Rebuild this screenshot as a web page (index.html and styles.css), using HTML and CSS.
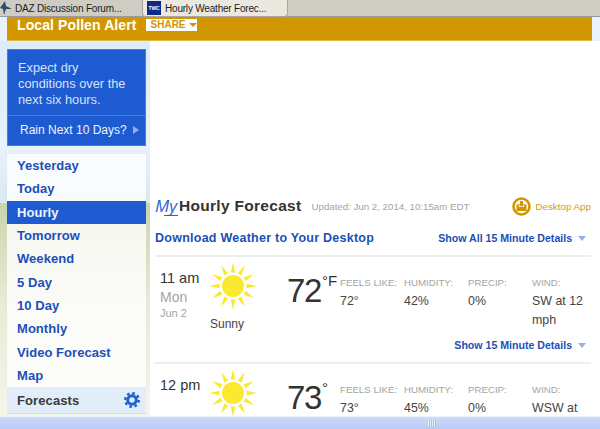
FILE: index.html
```html
<!DOCTYPE html>
<html lang="en">
<head>
  <meta charset="UTF-8">
  <title>Hourly Weather Forecast</title>
  <link rel="stylesheet" href="styles.css">
</head>
<body>
  <div class="tabs">
    <div class="tab">
      <svg class="tab-bird" width="12" height="14" viewBox="0 0 12 14"><polygon points="0,7 5,0 6,5 12,8 6,8 4,14 3,8" fill="#2f4f6f"/></svg>
      <span>DAZ Discussion Forum...</span>
    </div>
    <div class="tab tab-active">
      <span class="twc">TWC</span>
      <span>Hourly Weather Forec...</span>
    </div>
  </div>

  <div class="page">
    <div class="alert">
      <span class="alert-title">Local Pollen Alert</span>
      <span class="share">SHARE <i class="share-arrow"></i></span>
    </div>

    <div class="content">
      <div class="sidebar">
        <div class="promo">
          <p class="promo-text">Expect dry conditions over the next six hours.</p>
          <div class="promo-link">Rain Next 10 Days? <i class="promo-arrow"></i></div>
        </div>
        <nav class="nav">
          <a href="#">Yesterday</a>
          <a href="#">Today</a>
          <a href="#" class="active">Hourly</a>
          <a href="#">Tomorrow</a>
          <a href="#">Weekend</a>
          <a href="#">5 Day</a>
          <a href="#">10 Day</a>
          <a href="#">Monthly</a>
          <a href="#">Video Forecast</a>
          <a href="#">Map</a>
        </nav>
        <div class="nav-foot">
          <span>Forecasts</span>
          <svg width="16" height="16" viewBox="0 0 16 16">
            <circle cx="8" cy="8" r="6.8" fill="none" stroke="#1f5fd0" stroke-width="2.4" stroke-dasharray="2.7 2.64"/>
            <circle cx="8" cy="8" r="4.3" fill="none" stroke="#1f5fd0" stroke-width="3"/>
          </svg>
        </div>
      </div>

      <main class="main">
        <div class="head">
          <span class="my">My</span>
          <h1>Hourly Forecast</h1>
          <span class="updated">Updated: Jun 2, 2014, 10:15am EDT</span>
          <span class="app">
            <svg width="19" height="19" viewBox="0 0 19 19">
              <circle cx="9.5" cy="9.5" r="8" fill="#fff" stroke="#d29600" stroke-width="2.6"/>
              <path d="M4.5 7.5h2.5v2.5h5V7.5h2.5v6.5h-10z" fill="#d29600"/>
              <path d="M8 4h3v3h1.6L9.5 10 6.4 7H8z" fill="#d29600"/>
            </svg>
            Desktop App
          </span>
        </div>
        <div class="sub">
          <a href="#" class="download">Download Weather to Your Desktop</a>
          <a href="#" class="details">Show All 15 Minute Details <i class="down"></i></a>
        </div>

        <section class="row">
          <div class="row-grid">
            <div class="when">
              <div class="hour">11 am</div>
              <div class="day">Mon</div>
              <div class="date">Jun 2</div>
            </div>
            <div class="sky">
              <svg class="sun" width="48" height="48" viewBox="-24 -24 48 48"><use href="#sun"/></svg>
              <div class="sky-text">Sunny</div>
            </div>
            <div class="temp">72<sup>°F</sup></div>
            <div class="stat"><b>FEELS LIKE:</b>72°</div>
            <div class="stat"><b>HUMIDITY:</b>42%</div>
            <div class="stat"><b>PRECIP:</b>0%</div>
            <div class="stat"><b>WIND:</b>SW at 12 mph</div>
          </div>
          <a href="#" class="details row-details">Show 15 Minute Details <i class="down"></i></a>
        </section>

        <section class="row">
          <div class="row-grid">
            <div class="when">
              <div class="hour">12 pm</div>
            </div>
            <div class="sky">
              <svg class="sun" width="48" height="48" viewBox="-24 -24 48 48"><use href="#sun"/></svg>
            </div>
            <div class="temp">73<sup>°</sup></div>
            <div class="stat"><b>FEELS LIKE:</b>73°</div>
            <div class="stat"><b>HUMIDITY:</b>45%</div>
            <div class="stat"><b>PRECIP:</b>0%</div>
            <div class="stat"><b>WIND:</b>WSW at</div>
          </div>
        </section>
      </main>
    </div>
  </div>

  <div class="hscroll"><span class="grip"></span></div>

  <svg width="0" height="0" class="defs">
    <defs>
      <g id="sun" fill="#fbe92f">
        <circle r="11"/>
        <polygon id="ray" points="-2.2,-13.5 2.2,-13.5 0,-24"/>
        <use href="#ray" transform="rotate(30)"/>
        <use href="#ray" transform="rotate(60)"/>
        <use href="#ray" transform="rotate(90)"/>
        <use href="#ray" transform="rotate(120)"/>
        <use href="#ray" transform="rotate(150)"/>
        <use href="#ray" transform="rotate(180)"/>
        <use href="#ray" transform="rotate(210)"/>
        <use href="#ray" transform="rotate(240)"/>
        <use href="#ray" transform="rotate(270)"/>
        <use href="#ray" transform="rotate(300)"/>
        <use href="#ray" transform="rotate(330)"/>
      </g>
    </defs>
  </svg>
</body>
</html>
```

FILE: styles.css
```css
html, body {
  height: 100%;
}
body {
  margin: 0;
  display: flex;
  flex-direction: column;
  overflow: hidden;
  font-family: "Liberation Sans", Arial, sans-serif;
  color: #333;
  background: #fff;
}
a {
  text-decoration: none;
}
.defs {
  position: absolute;
}

/* browser tabs */
.tabs {
  display: flex;
  flex: none;
  height: 16px;
  background: #cfccc4;
  border-top: 1px solid #b5b3ab;
  border-bottom: 1px solid #9a9aa6;
  box-sizing: content-box;
  margin-top: -1px;
  font-size: 10px;
  letter-spacing: -0.2px;
  color: #1c1c1c;
}
.tab {
  display: flex;
  align-items: center;
  width: 142px;
  box-sizing: border-box;
  white-space: nowrap;
}
.tab-bird {
  margin: 0 3px 0 0;
}
.tab-active {
  width: 146px;
  padding-left: 4px;
  background: #ebe8df;
  border: 1px solid #a8a69e;
  border-top: 0;
  border-radius: 0 0 4px 4px;
  height: 17px;
}
.twc {
  width: 14px;
  height: 14px;
  margin-right: 4px;
  background: #0c2a8c;
  color: #fff;
  font-size: 5px;
  font-weight: bold;
  line-height: 14px;
  text-align: center;
}

/* page */
.page {
  flex: 1;
  min-height: 0;
  overflow: hidden;
  background: linear-gradient(#e9f2fa, #e9f2fa 24px, #fff 24px);
}
.alert {
  display: flex;
  align-items: flex-start;
  height: 24px;
  margin-right: 8px;
  margin-left: 7px;
  padding: 1px 0 0 10px;
  background: #d29600;
  border-bottom: 1px solid #e0b83f;
  box-sizing: border-box;
}
.alert-title {
  font-size: 14px;
  line-height: 14px;
  font-weight: bold;
  color: #fff;
  letter-spacing: 0.1px;
}
.share {
  display: flex;
  align-items: center;
  margin: 1px 0 0 9px;
  width: 51px;
  height: 12px;
  padding-left: 5px;
  box-sizing: border-box;
  background: #fff;
  color: #d29600;
  font-size: 10px;
  font-weight: bold;
  line-height: 12px;
  white-space: nowrap;
}
.share-arrow {
  margin-left: 3px;
  border-top: 4px solid #d29600;
  border-left: 4px solid transparent;
  border-right: 4px solid transparent;
}
.content {
  display: flex;
}

/* left column */
.sidebar {
  flex: none;
  width: 139px;
  height: 375px;
  padding: 8px 4px 0 7px;
  box-sizing: content-box;
  background:
    linear-gradient(#dcecf8 0, #e8f2fa 108px, #dbe8f0 162px, rgba(255,255,255,0) 162px),
    linear-gradient(#c9d4aa 162px, #e8ebd4 260px, #f5f5ea 375px);
}
.promo {
  background: #1f5bd0;
  border: 1px solid #4a7ce0;
  box-sizing: border-box;
  color: #d5e2fa;
  font-size: 12.8px;
}
.promo-text {
  margin: 0;
  height: 65px;
  padding: 10px 10px 0 10px;
  box-sizing: border-box;
  line-height: 16px;
}
.promo-link {
  height: 29px;
  padding-left: 12px;
  font-size: 12px;
  line-height: 28px;
  border-top: 1px solid #4a7ce0;
  color: #eef3fd;
  white-space: nowrap;
}
.promo-arrow {
  display: inline-block;
  margin-left: 3px;
  border-left: 6px solid #8fb0ee;
  border-top: 4px solid transparent;
  border-bottom: 4px solid transparent;
}
.nav {
  display: flex;
  flex-direction: column;
  margin-top: 8px;
  background: rgba(255, 255, 255, 0.8);
  box-shadow: 0 0 1px #c8d8e6;
}
.nav a {
  height: 23.35px;
  padding-left: 10px;
  line-height: 23px;
  font-size: 13px;
  font-weight: bold;
  color: #1c4fb8;
  letter-spacing: 0.05px;
}
.nav a.active {
  background: #1f5bd0;
  color: #eef3fd;
}
.nav-foot {
  display: flex;
  align-items: center;
  justify-content: space-between;
  height: 27px;
  padding: 0 6px 0 10px;
  box-sizing: border-box;
  background: #e1edf8;
  border-bottom: 1px solid #d6dde2;
  font-size: 13px;
  font-weight: bold;
  color: #3a3a3a;
  letter-spacing: 0.1px;
}

/* forecast column */
.main {
  flex: 1;
  min-width: 0;
  padding: 150px 9px 0 5px;
  background: #fff;
}
.head {
  display: flex;
  align-items: center;
  height: 30px;
}
.my {
  position: relative;
  width: 24px;
  font-family: "Open Sans", sans-serif;
  font-style: italic;
  font-size: 17px;
  line-height: 20px;
  color: #2a63d4;
}
.my::after {
  content: "";
  position: absolute;
  left: 9px;
  right: 1px;
  bottom: 0;
  border-bottom: 1px solid #2a63d4;
}
.head h1 {
  margin: 0 10px 0 0;
  font-size: 15.5px;
  font-weight: bold;
  color: #333;
  letter-spacing: 0.3px;
}
.updated {
  font-size: 9.7px;
  color: #a4a4a4;
}
.app {
  display: flex;
  align-items: center;
  gap: 4px;
  margin-left: auto;
  font-size: 9.8px;
  color: #d29a1e;
}
.sub {
  display: flex;
  align-items: center;
  justify-content: space-between;
  height: 34px;
  padding-right: 5px;
}
.download {
  font-size: 12.5px;
  font-weight: bold;
  color: #1c4fb8;
  letter-spacing: 0.25px;
}
.details {
  font-size: 10.6px;
  font-weight: bold;
  color: #1c4fb8;
}
.down {
  display: inline-block;
  margin-left: 3px;
  vertical-align: 1px;
  border-top: 5px solid #94aee6;
  border-left: 4px solid transparent;
  border-right: 4px solid transparent;
}
.row {
  height: 105px;
  border-top: 2px solid #eceff2;
}
.row-grid {
  display: grid;
  grid-template-columns: 54px 78px 53px 64px 64px 64px 1fr;
  padding-top: 12px;
}
.when {
  padding-left: 5px;
}
.hour {
  font-size: 14.5px;
  line-height: 18px;
}
.day {
  margin-top: 1px;
  font-size: 14px;
  line-height: 18px;
  color: #a4a4a4;
}
.date {
  font-size: 11px;
  line-height: 15px;
  color: #a4a4a4;
}
.sky {
  margin-top: -7px;
}
.sun {
  display: block;
}
.sky-text {
  margin: 7px 0 0 1px;
  font-size: 12px;
  color: #444;
}
.temp {
  font-size: 33px;
  line-height: 44px;
  letter-spacing: -1.3px;
  color: #333;
}
.temp sup {
  margin-left: 1px;
  font-size: 15px;
  line-height: 0;
  letter-spacing: 0;
  vertical-align: 16px;
}
.stat {
  margin-top: 5px;
  font-size: 12.4px;
  line-height: 19px;
  color: #444;
}
.stat b {
  display: block;
  font-size: 9.7px;
  line-height: 18px;
  font-weight: normal;
  color: #a4a4a4;
  white-space: nowrap;
}
.row-details {
  display: block;
  margin-top: 8px;
  text-align: right;
  padding-right: 5px;
}

/* page scrollbar */
.hscroll {
  flex: none;
  display: flex;
  justify-content: center;
  align-items: center;
  height: 13px;
  padding-left: 264px;
  box-sizing: border-box;
  background: linear-gradient(#ccdaf8, #b8ccf4);
  border-top: 1px solid #eef3fd;
}
.grip {
  width: 8px;
  height: 6px;
  background: repeating-linear-gradient(90deg, #e8effd 0, #e8effd 1px, #a6bdec 1px, #a6bdec 2px);
}
```
